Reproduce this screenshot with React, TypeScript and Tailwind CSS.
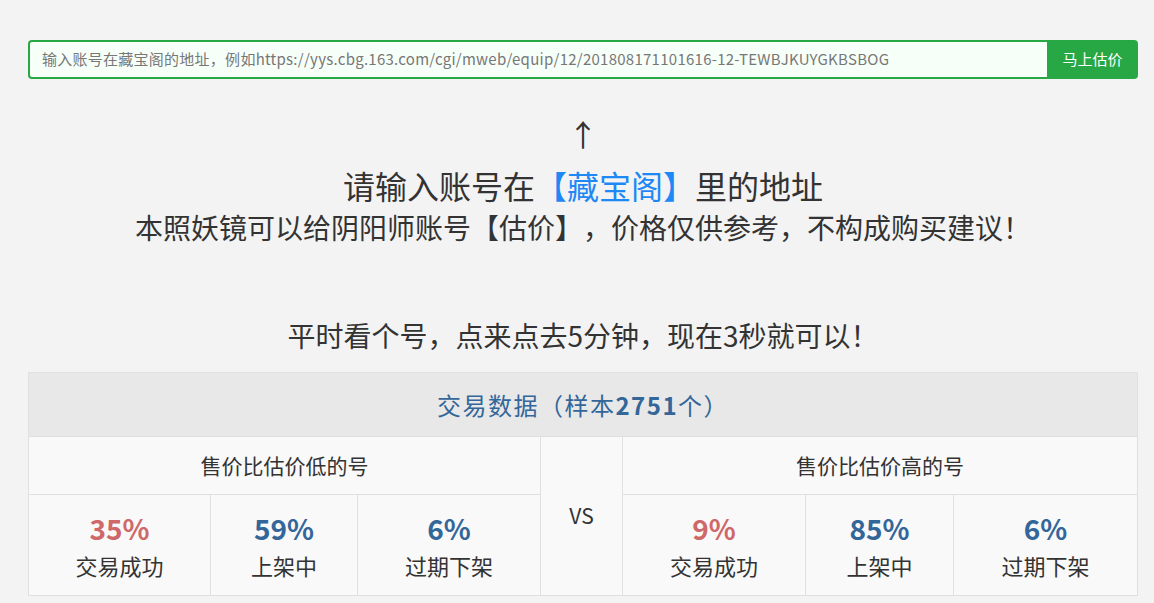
import React from "react";

const font = { fontFamily: '"Noto Sans CJK SC", "Noto Sans", sans-serif' };

function Stat({ value, label, red, className }: { value: string; label: string; red?: boolean; className?: string }) {
  return (
    <div className={"flex flex-col items-center justify-center " + (className ?? "")}>
      <div className={"text-[28px] font-bold leading-[36px] " + (red ? "text-[#cf6868]" : "text-[#336699]")}>{value}</div>
      <div className="mt-[3px] text-[22px] leading-[32px] text-[#333]">{label}</div>
    </div>
  );
}

export default function App() {
  return (
    <div className="h-[603px] w-full overflow-hidden bg-[#f3f3f3] pl-[28px] pr-[16px] pt-[40px] [text-spacing-trim:space-all]" style={font}>
      <div className="flex h-[39px] overflow-hidden rounded-[4px] bg-[#28a745]">
        <div className="m-[2px] mr-0 flex flex-1 items-center overflow-hidden whitespace-nowrap rounded-l-[2px] bg-[#f7fff9] pl-[12px] text-[15px] tracking-[0.26px] text-[#777]">
          输入账号在藏宝阁的地址，例如https://yys.cbg.163.com/cgi/mweb/equip/12/201808171101616-12-TEWBJKUYGKBSBOG
        </div>
        <button className="w-[91px] text-[15px] text-white">马上估价</button>
      </div>

      <div className="mt-[36px] text-center text-[30px] leading-[36px] text-[#333]">↑</div>
      <div className="mt-[14px] text-center text-[32px] leading-[40px] text-[#333]">
        请输入账号在<span className="text-[#1e88f5]">【藏宝阁】</span>里的地址
      </div>
      <div className="mt-[2px] text-center text-[28px] leading-[40px] text-[#333]">
        本照妖镜可以给阴阳师账号【估价】，价格仅供参考，不构成购买建议！
      </div>
      <div className="mt-[68px] text-center text-[28px] leading-[40px] text-[#333]">
        平时看个号，点来点去5分钟，现在3秒就可以！
      </div>

      <div className="mt-[17px] border border-[#e0e0e0] bg-[#f9f9f9]">
        <div className="flex h-[63px] items-center justify-center bg-[#e8e8e8] text-[24px] tracking-[1.5px] text-[#336699]">
          交易数据（样本<span className="font-bold">2751</span>个）
        </div>
        <div className="flex border-t border-[#e0e0e0]">
          <div className="flex w-[511px] flex-col">
            <div className="flex h-[57px] items-center justify-center text-[21px] text-[#333]">售价比估价低的号</div>
            <div className="flex h-[101px] border-t border-[#e0e0e0]">
              <Stat className="w-[181px]" value="35%" label="交易成功" red />
              <Stat className="w-[147px] border-l border-[#e0e0e0]" value="59%" label="上架中" />
              <Stat className="flex-1 border-l border-[#e0e0e0]" value="6%" label="过期下架" />
            </div>
          </div>
          <div className="flex w-[82px] items-center justify-center border-l border-[#e0e0e0] text-[21px] text-[#333]">VS</div>
          <div className="flex flex-1 flex-col border-l border-[#e0e0e0]">
            <div className="flex h-[57px] items-center justify-center text-[21px] text-[#333]">售价比估价高的号</div>
            <div className="flex h-[101px] border-t border-[#e0e0e0]">
              <Stat className="w-[182px]" value="9%" label="交易成功" red />
              <Stat className="w-[148px] border-l border-[#e0e0e0]" value="85%" label="上架中" />
              <Stat className="flex-1 border-l border-[#e0e0e0]" value="6%" label="过期下架" />
            </div>
          </div>
        </div>
      </div>
    </div>
  );
}
